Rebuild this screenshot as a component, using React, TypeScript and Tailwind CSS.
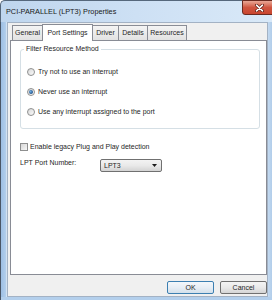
import React from "react";

const font = { fontFamily: '"Liberation Sans", Arial, sans-serif' };

function Radio({ checked }: { checked?: boolean }) {
  return (
    <div className="w-[8px] h-[8px] rounded-full border border-[#8e8f8f] bg-gradient-to-br from-[#d8d8d8] to-[#fbfbfb] flex items-center justify-center shrink-0">
      {checked && (
        <div className="w-[4px] h-[4px] rounded-full bg-[radial-gradient(circle_at_40%_40%,#6fb0e6,#1d4f86_70%)]" />
      )}
    </div>
  );
}

function Tab({ label, w, selected, first }: { label: string; w: string; selected?: boolean; first?: boolean }) {
  if (selected) {
    return (
      <div className={`relative z-10 -ml-[1px] h-[17px] ${w} bg-white border-l border-r border-t border-[#898c95] flex items-center justify-center pb-[1px]`}>
        {label}
      </div>
    );
  }
  return (
    <div className={`${first ? "" : "-ml-[1px]"} mb-[1px] h-[15px] ${w} bg-gradient-to-b from-[#f4f4f4] to-[#e2e2e2] border-l border-r border-t border-[#898c95] flex items-center justify-center`}>
      {label}
    </div>
  );
}

export default function App() {
  return (
    <div className="w-[272px] h-[300px] overflow-hidden flex flex-col text-[7px] leading-[8px] text-[#262626]" style={font}>
      {/* Title bar */}
      <div className="h-[22px] shrink-0 flex items-start border-t border-l border-[#56687c] rounded-tl-[5px] bg-gradient-to-r from-[#bfd6ee] via-[#cde0f4] to-[#d9e9f8]">
        <div className="h-full flex items-center pl-[5px] text-[7.3px] text-[#1a1a1a]">PCI-PARALLEL (LPT3) Properties</div>
        <div className="flex-1" />
        <div className="-mt-[1px] -mr-[4px] w-[34px] h-[15px] rounded-bl-[3px] border border-[#6b2a20] bg-gradient-to-b from-[#e8a796] via-[#cf5540] to-[#c9462f] flex items-center justify-center">
          <svg width="9" height="8" viewBox="0 0 9 8">
            <path d="M1.5 1.2 L7.5 6.8 M7.5 1.2 L1.5 6.8" stroke="#5a1c12" strokeWidth="3" strokeLinecap="round" />
            <path d="M1.5 1.2 L7.5 6.8 M7.5 1.2 L1.5 6.8" stroke="#ffffff" strokeWidth="1.6" strokeLinecap="round" />
          </svg>
        </div>
      </div>

      {/* Middle */}
      <div className="flex-1 flex min-h-0">
        <div className="w-[7px] shrink-0 border-l border-r border-l-[#4a5666] border-r-[#d2e2f2] bg-gradient-to-r from-[#9dbfe4] to-[#b3cfec]" />
        <div className="flex-1 flex flex-col border border-[#a3b2c4] bg-[#f0f0f0]">
          {/* Tabs */}
          <div className="mt-[1px] ml-[4px] h-[17px] flex items-end">
            <Tab label="General" w="w-[31px]" first />
            <Tab label="Port Settings" w="w-[51px]" selected />
            <Tab label="Driver" w="w-[27px]" />
            <Tab label="Details" w="w-[30px]" />
            <Tab label="Resources" w="w-[40px]" />
          </div>
          {/* Panel */}
          <div className="-mt-[1px] ml-[2px] h-[235px] border border-[#898c95] bg-white flex flex-col pl-[9px]">
            <fieldset className="mt-[4px] w-[240px] border border-[#d5dfe5] rounded-[3px] px-[3px] pt-[9px] pb-[6px] m-0">
              <legend className="px-[2px] leading-[8px]">Filter Resource Method</legend>
              <div className="h-[20px] flex items-center pl-[3px] gap-[3px]">
                <Radio />
                <span>Try not to use an interrupt</span>
              </div>
              <div className="h-[20px] flex items-center pl-[3px] gap-[3px]">
                <Radio checked />
                <span>Never use an interrupt</span>
              </div>
              <div className="h-[20px] flex items-center pl-[3px] gap-[3px]">
                <Radio />
                <span>Use any interrupt assigned to the port</span>
              </div>
            </fieldset>
            <div className="mt-[13px] h-[10px] flex items-center gap-[2px]">
              <div className="w-[8px] h-[8px] border border-[#8e8f8f] bg-gradient-to-br from-[#d6d6d6] to-[#f8f8f8] shrink-0" />
              <span>Enable legacy Plug and Play detection</span>
            </div>
            <div className="mt-[7px] flex items-start">
              <div className="w-[80px] mt-[0px]">LPT Port Number:</div>
              <div className="w-[62px] h-[13px] border border-[#707070] rounded-[2px] bg-gradient-to-b from-[#f3f3f3] via-[#e9e9e9] to-[#d3d3d3] flex items-center pl-[3px] pr-[4px]">
                <span>LPT3</span>
                <svg className="ml-auto" width="5" height="3" viewBox="0 0 5 3">
                  <path d="M0 0 L5 0 L2.5 3 Z" fill="#1a1a1a" />
                </svg>
              </div>
            </div>
          </div>
          {/* Buttons */}
          <div className="mt-[6px] flex justify-end gap-[6px]">
            <div className="w-[47px] h-[13px] border border-[#3c7fb1] rounded-[2px] bg-gradient-to-b from-[#f3f7fb] via-[#e7eef5] to-[#d3e0eb] flex items-center justify-center">OK</div>
            <div className="w-[47px] h-[13px] border border-[#707070] rounded-[2px] bg-gradient-to-b from-[#f4f4f4] via-[#e9e9e9] to-[#d5d5d5] flex items-center justify-center">Cancel</div>
          </div>
        </div>
        <div className="w-[4px] shrink-0 bg-gradient-to-r from-[#c3d9f0] to-[#b1cdea]" />
      </div>

      {/* Bottom frame */}
      <div className="h-[3px] shrink-0 border-l border-[#4a5666] bg-[#b3cfec]" />
    </div>
  );
}
